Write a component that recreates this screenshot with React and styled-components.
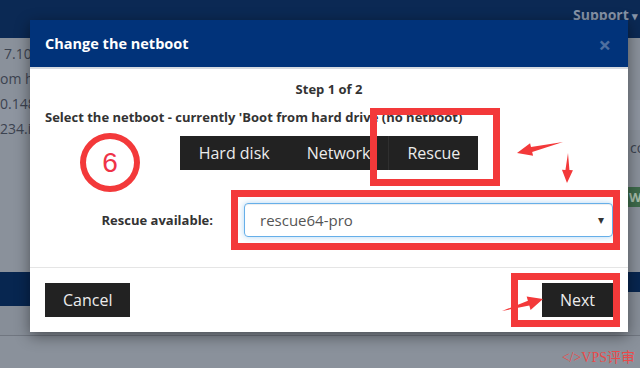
import React from 'react';
import styled, { createGlobalStyle } from 'styled-components';

const colors = {
    navy: '#0b2954',
    modalHead: '#01337a',
    overlay: '#8a919b',
    dark: '#222222',
    text: '#333333',
    red: '#f3393a',
};

const GlobalStyle = createGlobalStyle`
    html, body {
        margin: 0;
        padding: 0;
        overflow: hidden;
    }
    body {
        font-family: 'Open Sans', 'Noto Sans', sans-serif;
    }
`;

const arrowPoints = (x1, y1, x2, y2, hl, hw, sw) => {
    const dx = x2 - x1;
    const dy = y2 - y1;
    const len = Math.hypot(dx, dy);
    const ux = dx / len;
    const uy = dy / len;
    const nx = -uy;
    const ny = ux;
    const bx = x2 - ux * hl;
    const by = y2 - uy * hl;
    return [
        [x1, y1],
        [bx + nx * sw / 2, by + ny * sw / 2],
        [bx + nx * hw / 2, by + ny * hw / 2],
        [x2, y2],
        [bx - nx * hw / 2, by - ny * hw / 2],
        [bx - nx * sw / 2, by - ny * sw / 2],
    ].map(p => p.join(',')).join(' ');
};

const arrows = [
    [563, 142, 517, 153, 15, 13, 5],
    [568, 153, 567, 183, 13, 11, 4],
    [502, 311, 543, 299, 15, 14, 5],
];

const App = () => {
    return (
        <>
            <GlobalStyle />
            <Page>
                <Navbar>
                    <NavLink>Support <Caret>▾</Caret></NavLink>
                </Navbar>
                <Content>
                    <LeftColumn>
                        <span>7.10</span>
                        <span>om h</span>
                        <span>0.148</span>
                        <span>234.i</span>
                    </LeftColumn>
                    <RightColumn>
                        <span>co</span>
                        <Badge>W</Badge>
                    </RightColumn>
                </Content>
                <Band>
                    <BandEnd />
                </Band>
                <Divider />

                <Modal>
                    <ModalHeader>
                        <h4>Change the netboot</h4>
                        <Close>×</Close>
                    </ModalHeader>
                    <ModalBody>
                        <Step>Step 1 of 2</Step>
                        <Current>Select the netboot - currently 'Boot from hard drive (no netboot)</Current>
                        <BtnGroup>
                            <GroupButton>Hard disk</GroupButton>
                            <GroupButton>Network</GroupButton>
                            <GroupButton $active>Rescue</GroupButton>
                        </BtnGroup>
                        <FormRow>
                            <label>Rescue available:</label>
                            <SelectBox>
                                <span>rescue64-pro</span>
                                <SelectCaret>▾</SelectCaret>
                            </SelectBox>
                        </FormRow>
                    </ModalBody>
                    <ModalFooter>
                        <DarkButton>Cancel</DarkButton>
                        <DarkButton>Next</DarkButton>
                    </ModalFooter>
                </Modal>

                <StepCircle>6</StepCircle>
                <Mark $x={370} $y={108} $w={130} $h={78} />
                <Mark $x={231} $y={190} $w={389} $h={60} />
                <Mark $x={511} $y={273} $w={109} $h={54} />
                <Arrows viewBox="0 0 640 368">
                    {arrows.map((a, i) => (
                        <polygon key={i} points={arrowPoints(...a)} fill={colors.red} />
                    ))}
                </Arrows>
                <Watermark>&lt;/&gt;VPS评审</Watermark>
            </Page>
        </>
    );
}

export default App;

const Page = styled.div`
    position: relative;
    width: 640px;
    height: 368px;
    overflow: hidden;
    background-color: ${colors.overlay};
    display: flex;
    flex-direction: column;
`;

const Navbar = styled.div`
    height: 38px;
    flex-shrink: 0;
    background-color: ${colors.navy};
    display: flex;
    justify-content: flex-end;
    padding: 5px 0 0;
    box-sizing: border-box;
`;

const NavLink = styled.div`
    width: 67px;
    font-size: 14px;
    font-weight: 700;
    line-height: 20px;
    color: #8794a8;
    white-space: nowrap;
`;

const Caret = styled.span`
    font-size: 11px;
`;

const Content = styled.div`
    height: 234px;
    flex-shrink: 0;
    display: flex;
    justify-content: space-between;
    background: linear-gradient(#8a919b 0, #8a919b 62px, #8e95a0 62px, #8e95a0 92px, #8a919b 92px);
`;

const LeftColumn = styled.div`
    width: 34px;
    padding-top: 3px;
    display: flex;
    flex-direction: column;
    font-size: 14px;
    line-height: 25px;
    color: #3c4350;
    white-space: nowrap;
    overflow: hidden;

    span:first-child {
        padding-left: 4px;
    }
`;

const RightColumn = styled.div`
    width: 12px;
    padding-top: 99px;
    display: flex;
    flex-direction: column;
    align-items: flex-start;
    font-size: 14px;
    line-height: 22px;
    color: #3c4350;
    white-space: nowrap;
    overflow: hidden;

    & > span:first-child {
        padding-left: 2px;
    }
`;

const Badge = styled.span`
    margin-top: 28px;
    width: 30px;
    height: 20px;
    padding-left: 1px;
    background-color: #3e6b4b;
    color: #a7bfab;
    font-weight: 700;
    font-size: 13px;
    line-height: 20px;
`;

const Band = styled.div`
    height: 34px;
    flex-shrink: 0;
    background-color: #072650;
    display: flex;
    justify-content: flex-end;
    align-items: flex-end;
`;

const BandEnd = styled.div`
    width: 12px;
    height: 14px;
    background-color: #878e98;
`;

const Divider = styled.div`
    height: 29px;
    flex-shrink: 0;
    border-bottom: 1px solid #707680;
    background-color: #878e98;
`;

const Modal = styled.div`
    position: absolute;
    top: 20px;
    left: 30px;
    width: 598px;
    background-color: #ffffff;
    box-shadow: 0 4px 14px rgba(0, 0, 0, 0.45);
    display: flex;
    flex-direction: column;
`;

const ModalHeader = styled.div`
    height: 47px;
    padding: 0 15px;
    background-color: ${colors.modalHead};
    border-bottom: 2px solid #d6dae0;
    display: flex;
    align-items: center;
    justify-content: space-between;

    h4 {
        margin: 0;
        font-size: 14.5px;
        font-weight: 700;
        color: #ffffff;
    }
`;

const Close = styled.span`
    font-size: 22px;
    font-weight: 700;
    line-height: 1;
    color: #4f6f9f;
    margin-right: 2px;
`;

const ModalBody = styled.div`
    padding: 10px 15px 30px;
    display: flex;
    flex-direction: column;
    color: ${colors.text};
    font-size: 13px;
    font-weight: 700;
    line-height: 20px;
`;

const Step = styled.div`
    text-align: center;
`;

const Current = styled.div`
    margin-top: 8px;
    white-space: nowrap;
`;

const BtnGroup = styled.div`
    margin: 9px auto 0;
    display: flex;
`;

const GroupButton = styled.div`
    height: 34px;
    padding: 0 18px;
    box-sizing: border-box;
    background-color: ${colors.dark};
    border-left: 1px solid ${p => (p.$active ? '#2f2f2f' : colors.dark)};
    color: #ececec;
    font-size: 16px;
    font-weight: 400;
    line-height: 34px;
`;

const FormRow = styled.div`
    margin-top: 33px;
    display: grid;
    grid-template-columns: 168px 1fr;
    column-gap: 31px;
    align-items: center;

    label {
        text-align: right;
        white-space: nowrap;
    }
`;

const SelectBox = styled.div`
    height: 34px;
    box-sizing: border-box;
    padding: 0 8px 0 15px;
    border: 1px solid #66afe9;
    border-radius: 4px;
    box-shadow: inset 0 1px 1px rgba(0, 0, 0, 0.075), 0 0 6px rgba(102, 175, 233, 0.5);
    display: flex;
    align-items: center;
    justify-content: space-between;
    color: #555555;
    font-size: 15px;
    font-weight: 400;
`;

const SelectCaret = styled.span`
    font-size: 12px;
    color: #333333;
`;

const ModalFooter = styled.div`
    padding: 15px;
    border-top: 1px solid #e5e5e5;
    display: flex;
    justify-content: space-between;
`;

const DarkButton = styled.div`
    height: 34px;
    padding: 0 18px;
    background-color: ${colors.dark};
    color: #ececec;
    font-size: 16px;
    line-height: 34px;
`;

const StepCircle = styled.div`
    position: absolute;
    left: 80px;
    top: 133px;
    width: 60px;
    height: 59px;
    box-sizing: border-box;
    border: 6px solid ${colors.red};
    border-radius: 50%;
    display: flex;
    align-items: center;
    justify-content: center;
    color: #ef3348;
    font-size: 28px;
    font-family: 'Liberation Sans', sans-serif;
    line-height: 1;
`;

const Mark = styled.div`
    position: absolute;
    left: ${p => p.$x}px;
    top: ${p => p.$y}px;
    width: ${p => p.$w}px;
    height: ${p => p.$h}px;
    box-sizing: border-box;
    border: 7px solid ${colors.red};
`;

const Arrows = styled.svg`
    position: absolute;
    left: 0;
    top: 0;
    width: 640px;
    height: 368px;
    pointer-events: none;
`;

const Watermark = styled.div`
    position: absolute;
    right: 5px;
    bottom: 2px;
    font-family: 'Liberation Serif', 'Noto Sans CJK SC', serif;
    font-size: 14px;
    color: #e84a4a;
    white-space: nowrap;
`;
